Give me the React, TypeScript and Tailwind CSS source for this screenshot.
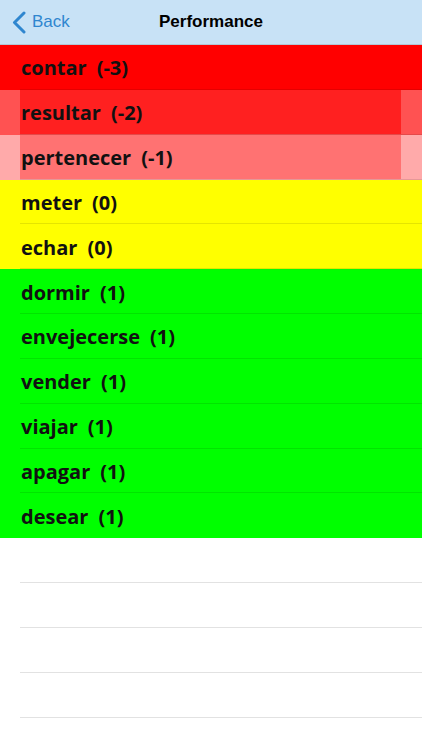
type Row = { word: string; score: number };

const rows: Row[] = [
  { word: "contar", score: -3 },
  { word: "resultar", score: -2 },
  { word: "pertenecer", score: -1 },
  { word: "meter", score: 0 },
  { word: "echar", score: 0 },
  { word: "dormir", score: 1 },
  { word: "envejecerse", score: 1 },
  { word: "vender", score: 1 },
  { word: "viajar", score: 1 },
  { word: "apagar", score: 1 },
  { word: "desear", score: 1 },
];

// 外側(左右の余白)と内側の色
function rowColors(score: number) {
  if (score <= -3) return { outer: "bg-[#ff0000]", inner: "bg-[#ff0000]" };
  if (score === -2) return { outer: "bg-[#ff5252]", inner: "bg-[#ff2020]" };
  if (score === -1) return { outer: "bg-[#ffaaaa]", inner: "bg-[#ff7272]" };
  if (score === 0) return { outer: "bg-[#ffff00]", inner: "bg-[#ffff00]" };
  return { outer: "bg-[#00ff00]", inner: "bg-[#00ff00]" };
}

function ScoreRow({ row, last }: { row: Row; last: boolean }) {
  const c = rowColors(row.score);
  return (
    <div className={`flex h-[44.85px] ${c.outer}`}>
      <div className="w-[20px] shrink-0" />
      <div
        className={`flex flex-1 ${last ? "" : "border-b border-black/10"}`}
      >
        <div className={`flex flex-1 items-center ${c.inner}`}>
          <span className="pl-[1px] pt-[3px] text-[20px] font-bold text-[#111]">
            {row.word}
            <span className="ml-[10px]">({row.score})</span>
          </span>
        </div>
        <div className="w-[21px] shrink-0" />
      </div>
    </div>
  );
}

export default function App() {
  return (
    <div
      className="h-[750px] w-[422px] overflow-hidden bg-white"
      style={{ fontFamily: '"Open Sans", "Liberation Sans", sans-serif' }}
    >
      {/* ナビゲーションバー */}
      <div className="relative flex h-[45px] items-center border-b border-[#b3c6d6] bg-[#c8e2f6]">
        <div className="flex items-center pl-[12px] text-[#2f86cf]">
          <svg width="15" height="23" viewBox="0 0 15 23" fill="none">
            <polyline
              points="12,2 2.5,11.5 12,21"
              stroke="currentColor"
              strokeWidth="3"
              strokeLinecap="round"
              strokeLinejoin="round"
            />
          </svg>
          <span
            className="ml-[5px] text-[17px]"
            style={{ fontFamily: '"Liberation Sans", sans-serif' }}
          >
            Back
          </span>
        </div>
        <div
          className="absolute left-0 right-0 text-center text-[17px] font-bold text-black"
          style={{ fontFamily: '"Liberation Sans", sans-serif' }}
        >
          Performance
        </div>
      </div>

      {/* 一覧 */}
      <div>
        {rows.map((r, i) => (
          <ScoreRow key={r.word} row={r} last={i === rows.length - 1} />
        ))}
      </div>

      {/* 空の行 */}
      <div>
        {[0, 1, 2, 3, 4].map((i) => (
          <div key={i} className="h-[44.85px] pl-[20px]">
            <div className="h-full border-b border-[#e2e2e2]" />
          </div>
        ))}
      </div>
    </div>
  );
}
